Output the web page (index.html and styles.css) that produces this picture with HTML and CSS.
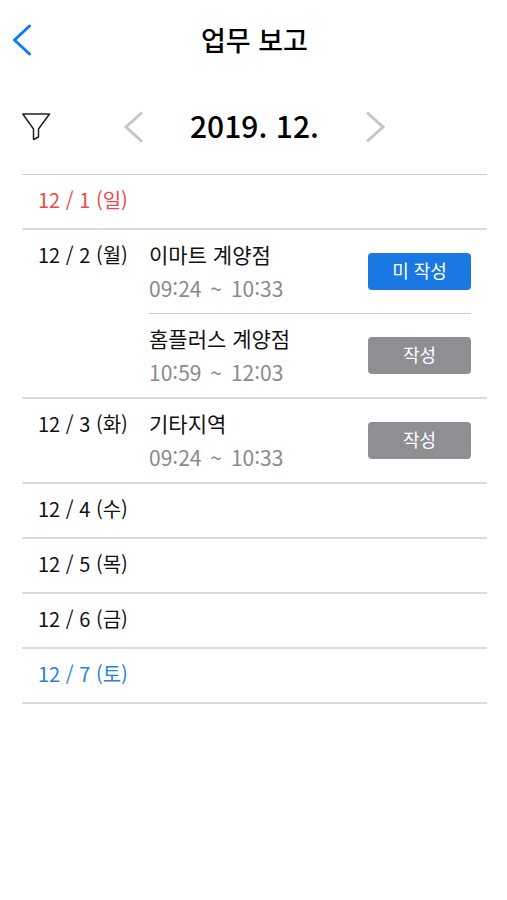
FILE: index.html
```html
<!DOCTYPE html>
<html lang="ko">
<head>
<meta charset="utf-8">
<meta name="viewport" content="width=device-width, initial-scale=1">
<title>업무 보고</title>
<link rel="stylesheet" href="styles.css">
</head>
<body>
<header class="topbar">
  <button class="icon-btn back" type="button" aria-label="뒤로">
    <svg width="20" height="32" viewBox="0 0 20 32"><path d="M17.500 2 2.500 16l15 14" fill="none" stroke="#0a7bfa" stroke-width="3" stroke-linecap="round" stroke-linejoin="round"/></svg>
  </button>
  <h1 class="title">업무 보고</h1>
</header>
<main class="report">
  <nav class="month-nav">
    <button class="icon-btn filter" type="button" aria-label="필터">
      <svg width="30" height="30" viewBox="0 0 30 30"><path d="M.8 2h26.700L16.500 17v8l-5 2.500V17z" fill="none" stroke="#222" stroke-width="1.500" stroke-linejoin="round"/></svg>
    </button>
    <div class="month-picker">
      <button class="icon-btn" type="button" aria-label="이전 달">
        <svg width="20" height="34" viewBox="0 0 20 34"><path d="M18 2.500 2 17l16 14.500" fill="none" stroke="#c6c6c6" stroke-width="3"/></svg>
      </button>
      <h2 class="month">2019. 12.</h2>
      <button class="icon-btn" type="button" aria-label="다음 달">
        <svg width="20" height="34" viewBox="0 0 20 34"><path d="M2 2.500 18 17 2 31.500" fill="none" stroke="#c6c6c6" stroke-width="3"/></svg>
      </button>
    </div>
  </nav>
  <ul class="days">
    <li class="day sunday"><span class="date">12 / 1 (일)</span></li>
    <li class="day">
      <span class="date">12 / 2 (월)</span>
      <ul class="visits">
        <li class="visit">
          <div class="info"><p class="place">이마트 계양점</p><p class="time">09:24 <span class="to">~</span> 10:33</p></div>
          <button class="status pending" type="button">미 작성</button>
        </li>
        <li class="visit">
          <div class="info"><p class="place">홈플러스 계양점</p><p class="time">10:59 <span class="to">~</span> 12:03</p></div>
          <button class="status" type="button">작성</button>
        </li>
      </ul>
    </li>
    <li class="day">
      <span class="date">12 / 3 (화)</span>
      <ul class="visits">
        <li class="visit">
          <div class="info"><p class="place">기타지역</p><p class="time">09:24 <span class="to">~</span> 10:33</p></div>
          <button class="status" type="button">작성</button>
        </li>
      </ul>
    </li>
    <li class="day"><span class="date">12 / 4 (수)</span></li>
    <li class="day"><span class="date">12 / 5 (목)</span></li>
    <li class="day"><span class="date">12 / 6 (금)</span></li>
    <li class="day saturday"><span class="date">12 / 7 (토)</span></li>
  </ul>
</main>
</body>
</html>
```
FILE: styles.css
```css
* {
  box-sizing: border-box;
}

body,
h1,
h2,
p,
ul {
  margin: 0;
  padding: 0;
}

body {
  background: #fff;
  color: #111;
  font-family: "Noto Sans CJK KR", sans-serif;
  font-size: 21px;
  line-height: 34px;
}

ul {
  list-style: none;
}

svg {
  display: block;
}

.icon-btn {
  padding: 0;
  border: 0;
  background: none;
  cursor: pointer;
}

.topbar {
  display: grid;
  grid-template-columns: 40px 1fr 40px;
  align-items: center;
  height: 80px;
  padding: 0 10px 0 12px;
}

.title {
  color: #000;
  font-size: 27px;
  font-weight: 500;
  text-align: center;
}

.report {
  padding: 0 20px 0 22px;
}

.month-nav {
  display: grid;
  grid-template-columns: 30px 1fr 30px;
  align-items: center;
  height: 94px;
}

.month-picker {
  display: flex;
  justify-content: center;
  align-items: center;
  gap: 46px;
}

.month {
  padding-bottom: 4px;
  color: #000;
  font-size: 30px;
  font-weight: 500;
}

.days {
  border-top: 1px solid #cccccc;
}

.day {
  display: grid;
  grid-template-columns: 111px 1fr;
  padding: 0 16px;
  border-bottom: 2px solid #dcdcdc;
}

.date {
  padding: 8px 0 11px;
  font-size: 20px;
}

.sunday {
  color: #f04848;
}

.saturday {
  color: #2b80dc;
}

.visit {
  display: flex;
  justify-content: space-between;
  align-items: center;
  padding: 7px 0 8px;
}

.visit + .visit {
  border-top: 1px solid #cccccc;
}

.time {
  color: #8a8a8a;
}

.to {
  margin: 0 3px;
}

.status {
  width: 103px;
  height: 37px;
  padding: 0 0 2px;
  border: 0;
  border-radius: 4px;
  background: #8e8e93;
  color: #fff;
  font-family: inherit;
  font-size: 18px;
  cursor: pointer;
}

.pending {
  background: #1a78e2;
}
```
